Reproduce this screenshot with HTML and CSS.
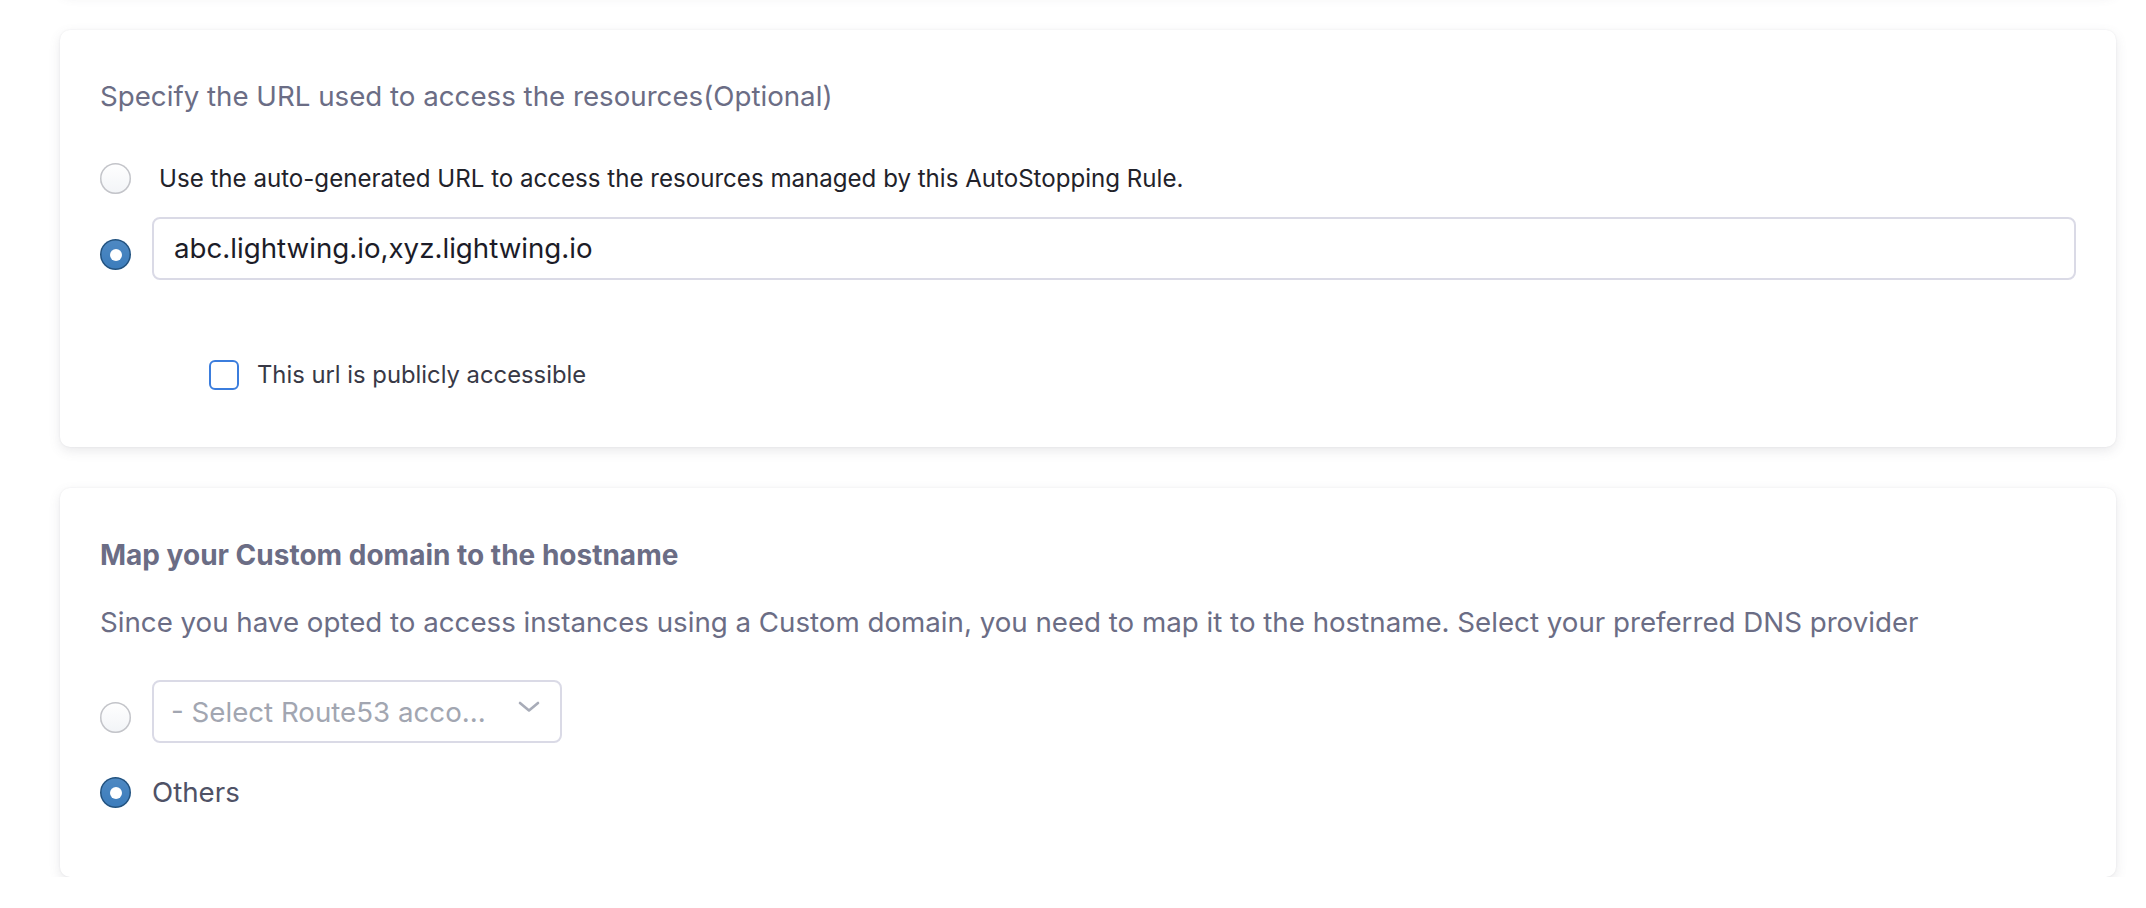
FILE: index.html
```html
<!DOCTYPE html>
<html lang="en">
<head>
<meta charset="utf-8">
<title>Access URL</title>
<link rel="stylesheet" href="styles.css">
</head>
<body>
<div class="page">
  <div class="card prev"></div>

  <section class="card card-url">
    <p class="heading">Specify the URL used to access the resources(Optional)</p>
    <div class="opt opt-auto">
      <span class="radio"></span>
      <span class="opt-label">Use the auto-generated URL to access the resources managed by this AutoStopping Rule.</span>
    </div>
    <div class="opt opt-field">
      <span class="radio checked"></span>
      <div class="input">abc.lightwing.io,xyz.lightwing.io</div>
    </div>
    <label class="check-row">
      <span class="checkbox"></span>
      <span class="check-label">This url is publicly accessible</span>
    </label>
  </section>

  <section class="card card-dns">
    <h3 class="title">Map your Custom domain to the hostname</h3>
    <p class="desc">Since you have opted to access instances using a Custom domain, you need to map it to the hostname. Select your preferred DNS provider</p>
    <div class="opt opt-field">
      <span class="radio"></span>
      <div class="select">
        <span class="placeholder">- Select Route53 acco...</span>
        <svg class="chev" width="26" height="14" viewBox="0 0 26 14"><path d="M4 3 L13 10.5 L22 3" fill="none" stroke="#a8acb8" stroke-width="2.6" stroke-linecap="round" stroke-linejoin="round"/></svg>
      </div>
    </div>
    <div class="opt opt-others">
      <span class="radio checked"></span>
      <span class="others-label">Others</span>
    </div>
  </section>
</div>
</body>
</html>
```
FILE: styles.css
```css
* { box-sizing: border-box; }
html, body { margin: 0; padding: 0; background: #ffffff; }
body { font-family: "Inter", "Noto Sans", sans-serif; -webkit-font-smoothing: antialiased; }

.page {
  display: flex;
  flex-direction: column;
  gap: 41px;
  padding: 0 30px 0 60px;
}

.card {
  background: #ffffff;
  border-radius: 10px;
  box-shadow: 0 0 2px rgba(40, 41, 61, 0.08), 0 4px 12px rgba(96, 97, 112, 0.14);
}

.card.prev {
  height: 30px;
  margin-top: -38px;
  margin-bottom: -3px;
}

.card-url {
  height: 417px;
  padding: 49px 40px 0 40px;
}

.card-dns {
  height: 389px;
  padding: 50px 40px 0 40px;
}

.heading {
  margin: 0;
  font-size: 27.7px;
  line-height: 34px;
  color: #6b6d85;
  font-weight: 400;
}

.opt {
  display: flex;
  gap: 21px;
}

.opt-auto {
  margin-top: 50px;
  align-items: center;
}

.opt-auto .opt-label { margin-left: 7px; }

.opt-label {
  font-size: 24.1px;
  line-height: 31px;
  color: #22222a;
}

.card-url .opt-field { margin-top: 23px; align-items: flex-start; }
.opt-field .radio { margin-top: 22px; }

.radio {
  flex: none;
  width: 31px;
  height: 31px;
  border-radius: 50%;
  background: linear-gradient(#ffffff, #f2f4f7);
  box-shadow: inset 0 0 0 1.5px #c3c4c9, inset 0 -1px 0 rgba(16, 22, 26, 0.08);
  position: relative;
}

.radio.checked {
  background: #3b7cbc linear-gradient(rgba(255,255,255,0.1), rgba(255,255,255,0));
  box-shadow: inset 0 0 0 1.5px #24527d;
}

.radio.checked::after {
  content: "";
  position: absolute;
  left: 50%;
  top: 50%;
  width: 12px;
  height: 12px;
  margin: -6px 0 0 -6px;
  border-radius: 50%;
  background: #ffffff;
}

.input {
  flex: 1;
  height: 63px;
  border: 2px solid #dadae6;
  border-radius: 8px;
  padding: 0 20px;
  display: flex;
  align-items: center;
  font-size: 27.7px;
  color: #1c1c28;
  padding-bottom: 1px;
}

.check-row {
  display: flex;
  align-items: center;
  gap: 18px;
  margin: 80px 0 0 109px;
}

.checkbox {
  flex: none;
  width: 30px;
  height: 30px;
  border: 2px solid #3b7ddd;
  border-radius: 6px;
  background: #fff;
}

.check-label {
  font-size: 23.8px;
  line-height: 30px;
  color: #383946;
}

.title {
  margin: 0;
  font-size: 28px;
  line-height: 34px;
  font-weight: 700;
  color: #6b6d85;
}

.desc {
  margin: 33px 0 0 0;
  font-size: 27.7px;
  line-height: 34px;
  color: #6b6d85;
}

.card-dns .opt-field { margin-top: 41px; align-items: flex-start; }

.select {
  width: 410px;
  height: 63px;
  border: 2px solid #dadae6;
  border-radius: 8px;
  display: flex;
  align-items: center;
  justify-content: space-between;
  padding: 0 18px 0 17px;
  font-size: 27.7px;
  color: #a2a6b1;
}

.chev { margin-top: -10px; }

.opt-others {
  margin-top: 34px;
  align-items: center;
}

.others-label {
  font-size: 27.7px;
  line-height: 31px;
  color: #4f5266;
}
```
